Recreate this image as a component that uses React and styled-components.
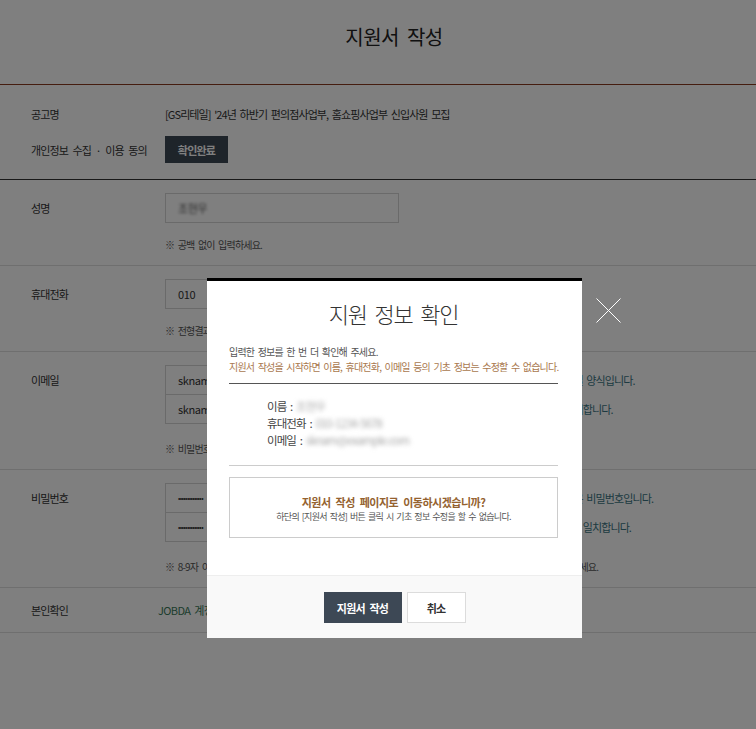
import React from "react";
import styled, { createGlobalStyle } from "styled-components";

const GlobalStyle = createGlobalStyle`
  html, body {
    margin: 0;
    padding: 0;
    background: #fff;
    overflow: hidden;
  }
  body {
    font-family: "Noto Sans CJK KR", "Noto Sans", sans-serif;
    color: #333;
  }
  * {
    box-sizing: border-box;
  }
`;

const Page = styled.div`
  min-height: 729px;
  background: #fff;
`;

const Header = styled.header`
  height: 85px;
  padding: 25px 0 0 32px;
  border-bottom: 1px solid #8b3a1e;
  text-align: center;
`;

const Title = styled.h1`
  margin: 0;
  font-size: 20px;
  line-height: 24px;
  font-weight: 400;
  letter-spacing: -0.5px;
  word-spacing: 4px;
  color: #222;
`;

const Section = styled.section`
  padding: ${(p) => p.$pad || "13px 0 13px"};
  border-bottom: 1px solid ${(p) => (p.$dark ? "#333" : "#dedede")};
  display: flex;
  flex-direction: column;
  gap: ${(p) => p.$gap || 0}px;
`;

const Row = styled.div`
  display: flex;
  align-items: ${(p) => (p.$center ? "center" : "flex-start")};
  padding-left: 31px;
  min-height: ${(p) => p.$h || 0}px;
`;

const Label = styled.div`
  width: 134px;
  flex-shrink: 0;
  font-size: 11px;
  line-height: ${(p) => p.$lh || 30}px;
  letter-spacing: -0.9px;
  word-spacing: 3px;
  color: #333;
`;

const Value = styled.div`
  font-size: 11px;
  line-height: 18px;
  letter-spacing: -0.9px;
  word-spacing: 2px;
  color: #333;
  white-space: nowrap;
`;

const DarkButton = styled.button`
  width: ${(p) => p.$w}px;
  height: ${(p) => p.$h}px;
  border: 1px solid #3d4855;
  background: #3d4855;
  color: #fff;
  font-family: inherit;
  font-size: 11px;
  font-weight: 700;
  letter-spacing: -0.8px;
  word-spacing: 3px;
  padding: 0;
  cursor: pointer;
`;

const LightButton = styled(DarkButton)`
  border-color: #dcdcdc;
  background: #fff;
  color: #333;
`;

const Field = styled.div`
  display: flex;
  flex-direction: column;
  flex-shrink: 0;
`;

const InputLine = styled.div`
  display: flex;
  align-items: center;
  gap: 11px;
  & + & {
    margin-top: -1px;
  }
`;

const InputBox = styled.div`
  width: ${(p) => p.$w}px;
  height: 30px;
  border: 1px solid #d5d5d5;
  background: #fff;
  padding: 0 12px;
  display: flex;
  align-items: center;
  font-size: 11px;
  letter-spacing: -0.4px;
  color: #333;
  white-space: nowrap;
  overflow: hidden;
`;

const Dots = styled.span`
  font-size: 7px;
  letter-spacing: -0.6px;
  color: #333;
`;

const Dash = styled.span`
  font-size: 11px;
  color: #666;
`;

const PhoneGroup = styled.div`
  display: flex;
  align-items: center;
  gap: 6px;
`;

const Blur = styled.span`
  filter: blur(${(p) => p.$r || 2}px);
  color: ${(p) => p.$c || "#888"};
`;

const Message = styled.span`
  font-size: 11px;
  letter-spacing: -0.9px;
  word-spacing: 2px;
  color: #3b7583;
  white-space: nowrap;
`;

const Note = styled.p`
  margin: ${(p) => p.$mt || 15}px 0 0;
  font-size: 10px;
  line-height: 14px;
  letter-spacing: -0.8px;
  word-spacing: 2px;
  color: #555;
  white-space: nowrap;
`;

const LinkText = styled.span`
  margin-left: -7px;
  font-size: 11px;
  line-height: 30px;
  letter-spacing: -0.6px;
  word-spacing: 2px;
  color: #3b7a5a;
  white-space: nowrap;
`;

/* modal */

const Overlay = styled.div`
  position: fixed;
  inset: 0;
  background: rgba(0, 0, 0, 0.5);
`;

const Modal = styled.div`
  position: fixed;
  top: 278px;
  left: 207px;
  width: 375px;
  background: #fff;
  border-top: 3px solid #000;
`;

const ModalBody = styled.div`
  padding: 0 24px 37px 22px;
`;

const ModalTitle = styled.h2`
  margin: 15px 0 0;
  font-size: 22px;
  line-height: 34px;
  font-weight: 300;
  letter-spacing: -1.2px;
  word-spacing: 4px;
  text-align: center;
  color: #333;
`;

const Intro = styled.p`
  margin: 14px 0 0;
  font-size: 10px;
  line-height: 15px;
  letter-spacing: -0.8px;
  word-spacing: 2px;
  color: #555;
  white-space: nowrap;
`;

const Warn = styled.span`
  display: block;
  color: #a9784e;
`;

const Divider = styled.div`
  border-top: 1px solid ${(p) => p.$color};
  margin-top: ${(p) => p.$mt}px;
`;

const InfoList = styled.ul`
  list-style: none;
  margin: 14px 0 0;
  padding: 0 0 0 38px;
`;

const InfoItem = styled.li`
  font-size: 11.5px;
  line-height: 17px;
  letter-spacing: -0.9px;
  word-spacing: 2px;
  color: #444;
  white-space: nowrap;
`;

const ConfirmBox = styled.div`
  margin-top: 11px;
  border: 1px solid #ccc;
  padding: 16px 0 13px;
  text-align: center;
`;

const BoxTitle = styled.div`
  font-size: 11px;
  line-height: 16px;
  font-weight: 700;
  letter-spacing: -0.5px;
  word-spacing: 3px;
  color: #94622f;
`;

const BoxSub = styled.div`
  font-size: 9px;
  line-height: 14px;
  letter-spacing: -0.7px;
  word-spacing: 1.5px;
  color: #555;
`;

const ModalFooter = styled.div`
  border-top: 1px solid #eee;
  background: #f9f9f9;
  padding: 16px 0 15px;
  display: flex;
  justify-content: center;
  gap: 5px;
`;

const CloseButton = styled.button`
  position: fixed;
  top: 298px;
  left: 596px;
  width: 25px;
  height: 25px;
  padding: 0;
  border: 0;
  background: transparent;
  cursor: pointer;
`;

export default function App() {
  return (
    <>
      <GlobalStyle />
      <Page>
        <Header>
          <Title>지원서 작성</Title>
        </Header>

        <Section $dark $pad="20px 0 16px" $gap={13}>
          <Row $center $h={18}>
            <Label $lh={18}>공고명</Label>
            <Value>[GS리테일] '24년 하반기 편의점사업부, 홈쇼핑사업부 신입사원 모집</Value>
          </Row>
          <Row $center $h={27}>
            <Label $lh={18}>개인정보 수집 · 이용 동의</Label>
            <DarkButton $w={63} $h={27}>확인완료</DarkButton>
          </Row>
        </Section>

        <Section>
          <Row>
            <Label>성명</Label>
            <Field>
              <InputLine>
                <InputBox $w={234}>
                  <Blur $c="#555" $r={1.5}>조현우</Blur>
                </InputBox>
              </InputLine>
              <Note>※ 공백 없이 입력하세요.</Note>
            </Field>
          </Row>
        </Section>

        <Section>
          <Row>
            <Label>휴대전화</Label>
            <Field>
              <PhoneGroup>
                <InputBox $w={70}>010</InputBox>
                <Dash>-</Dash>
                <InputBox $w={70}>1234</InputBox>
                <Dash>-</Dash>
                <InputBox $w={70}>5678</InputBox>
              </PhoneGroup>
              <Note>※ 전형결과 안내 문자가 발송됩니다.</Note>
            </Field>
          </Row>
        </Section>

        <Section>
          <Row>
            <Label>이메일</Label>
            <Field>
              <InputLine>
                <InputBox $w={245}>sknam@example.com</InputBox>
                <Message>입력하신 이메일은 사용 가능한 이메일 양식입니다.</Message>
              </InputLine>
              <InputLine>
                <InputBox $w={245}>sknam@example.com</InputBox>
                <Message>입력하신 이메일과 확인 이메일이 일치합니다.</Message>
              </InputLine>
              <Note $mt={18}>※ 비밀번호 분실 시 이메일로 안내됩니다.</Note>
            </Field>
          </Row>
        </Section>

        <Section>
          <Row>
            <Label>비밀번호</Label>
            <Field>
              <InputLine>
                <InputBox $w={245}>
                  <Dots>••••••••••••••</Dots>
                </InputBox>
                <Message>입력하신 비밀번호는 보안 등급이 높은 비밀번호입니다.</Message>
              </InputLine>
              <InputLine>
                <InputBox $w={245}>
                  <Dots>••••••••••••••</Dots>
                </InputBox>
                <Message>입력하신 비밀번호와 확인 비밀번호가 일치합니다.</Message>
              </InputLine>
              <Note $mt={18}>
                ※ 8-9자 이상의 영문 대소문자, 숫자, 특수문자를 모두 조합하여 사용하기 편리한 안전한 비밀번호를 입력하세요.
              </Note>
            </Field>
          </Row>
        </Section>

        <Section $pad="7px 0">
          <Row>
            <Label>본인확인</Label>
            <LinkText>JOBDA 계정 연동이 완료되었습니다.</LinkText>
          </Row>
        </Section>
      </Page>

      <Overlay />

      <Modal>
        <ModalBody>
          <ModalTitle>지원 정보 확인</ModalTitle>
          <Intro>
            입력한 정보를 한 번 더 확인해 주세요.
            <Warn>지원서 작성을 시작하면 이름, 휴대전화, 이메일 등의 기초 정보는 수정할 수 없습니다.</Warn>
          </Intro>
          <Divider $color="#555" $mt={9} />
          <InfoList>
            <InfoItem>
              이름 : <Blur $c="#aaa">조현우</Blur>
            </InfoItem>
            <InfoItem>
              휴대전화 : <Blur $c="#aaa">010-1234-5678</Blur>
            </InfoItem>
            <InfoItem>
              이메일 : <Blur $c="#aaa">sknam@example.com</Blur>
            </InfoItem>
          </InfoList>
          <Divider $color="#ccc" $mt={16} />
          <ConfirmBox>
            <BoxTitle>지원서 작성 페이지로 이동하시겠습니까?</BoxTitle>
            <BoxSub>하단의 [지원서 작성] 버튼 클릭 시 기초 정보 수정을 할 수 없습니다.</BoxSub>
          </ConfirmBox>
        </ModalBody>
        <ModalFooter>
          <DarkButton $w={78} $h={31}>지원서 작성</DarkButton>
          <LightButton $w={59} $h={31}>취소</LightButton>
        </ModalFooter>
      </Modal>

      <CloseButton aria-label="닫기">
        <svg width="25" height="25" viewBox="0 0 25 25">
          <path d="M0.5 0.5 L24.5 24.5 M24.5 0.5 L0.5 24.5" stroke="#fff" strokeWidth="1" fill="none" />
        </svg>
      </CloseButton>
    </>
  );
}
